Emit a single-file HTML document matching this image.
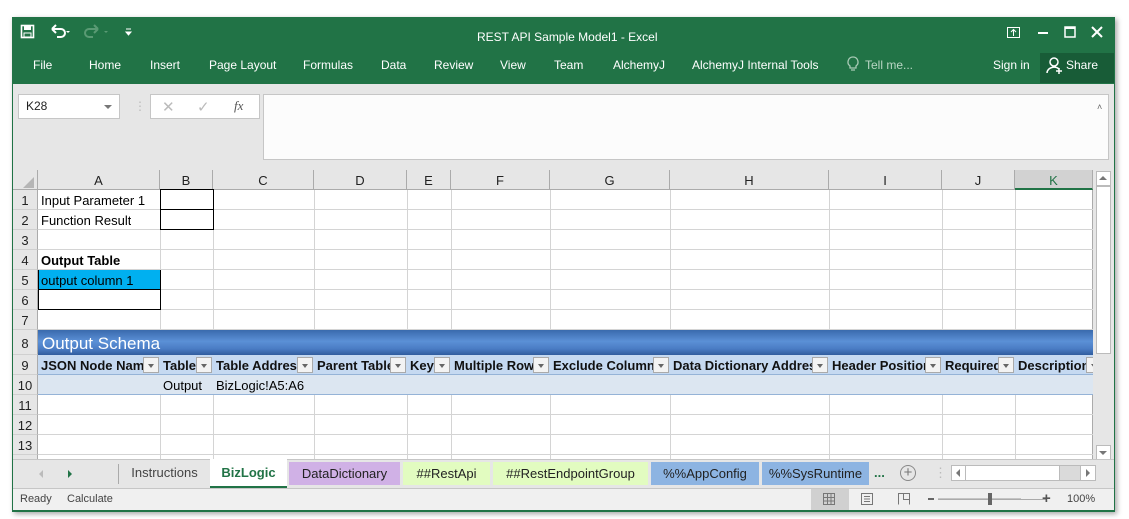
<!DOCTYPE html>
<html><head><meta charset="utf-8"><style>
*{margin:0;padding:0;box-sizing:border-box}
body{width:1129px;height:519px;background:#fff;position:relative;overflow:hidden;font-family:"Liberation Sans",sans-serif;}
.a{position:absolute}
.w{color:#fff;font-size:12px}
.vl{position:absolute;width:1px;background:#d4d4d4}
.hl{position:absolute;height:1px;background:#d4d4d4}
.ch{position:absolute;top:170px;height:20px;font-size:13px;color:#222;text-align:center;line-height:21px;border-right:1px solid #ababab;border-bottom:1px solid #ababab;background:#e6e6e6}
.rh{position:absolute;left:13px;width:25px;font-size:13px;color:#222;text-align:center;background:#e6e6e6;border-right:1px solid #ababab;border-bottom:1px solid #d0d0d0}
.c{position:absolute;font-size:13px;color:#000;line-height:21px;white-space:nowrap;overflow:hidden}
.fb{position:absolute;top:357px;width:16px;height:16px;background:#f3f3f3;border:1px solid #aaa}
.fb:after{content:"";position:absolute;left:4px;top:6px;border-left:3px solid transparent;border-right:3px solid transparent;border-top:4px solid #666}
.hd{position:absolute;top:355px;height:20px;line-height:21px;font-size:13px;font-weight:bold;color:#111;white-space:nowrap;overflow:hidden}
.tab{position:absolute;top:460px;height:27px;line-height:26px;font-size:13px;color:#222;text-align:center}
</style></head><body>
<div class="a" style="left:12px;top:17px;width:1103px;height:495px;box-shadow:2px 2px 5px rgba(0,0,0,.35);background:#e6e6e6;border:1px solid #217346"></div>
<div class="a" style="left:12px;top:17px;width:1103px;height:67px;background:#217346"></div>
<svg class="a" style="left:20px;top:23px" width="120" height="18">
<rect x="1.5" y="2.5" width="12" height="12" fill="none" stroke="#fff" stroke-width="1.6"/><rect x="4" y="3" width="7" height="4" fill="#fff"/><rect x="4" y="10" width="7" height="4" fill="none" stroke="#fff"/>
<path d="M32 6 L36 2 M32 6 L36 10 M32 6 H41 a4 4 0 0 1 0 8 H37" fill="none" stroke="#fff" stroke-width="2"/>
<path d="M46 8 l2 2 l2-2z" fill="#fff"/>
<path d="M78 6 L74 2 M78 6 L74 10 M78 6 H69 a4 4 0 0 0 0 8 H73" fill="none" stroke="#5a9a74" stroke-width="2"/>
<path d="M84 8 l2 2 l2-2z" fill="#5a9a74"/>
<path d="M106 6 h5 M106 9 l2.5 3 l2.5-3z" stroke="#fff" fill="#fff"/>
</svg>
<div class="a w" style="left:477px;top:30px">REST API Sample Model1 - Excel</div>
<svg class="a" style="left:1000px;top:24px" width="112" height="16">
<rect x="7.5" y="3.5" width="12" height="10" fill="none" stroke="#fff"/><path d="M13.5 12 V6 M11 8 l2.5-2.5 l2.5 2.5" stroke="#fff" fill="none"/>
<rect x="38" y="8" width="10" height="2" fill="#fff"/>
<rect x="65" y="3" width="10" height="10" fill="none" stroke="#fff" stroke-width="1.5"/><rect x="65" y="3" width="10" height="2" fill="#fff"/>
<path d="M92 3 L102 13 M102 3 L92 13" stroke="#fff" stroke-width="2"/>
</svg>
<div class="a w" style="left:33px;top:58px">File</div>
<div class="a w" style="left:89px;top:58px">Home</div>
<div class="a w" style="left:150px;top:58px">Insert</div>
<div class="a w" style="left:209px;top:58px">Page Layout</div>
<div class="a w" style="left:303px;top:58px">Formulas</div>
<div class="a w" style="left:381px;top:58px">Data</div>
<div class="a w" style="left:434px;top:58px">Review</div>
<div class="a w" style="left:500px;top:58px">View</div>
<div class="a w" style="left:554px;top:58px">Team</div>
<div class="a w" style="left:613px;top:58px">AlchemyJ</div>
<div class="a w" style="left:692px;top:58px">AlchemyJ Internal Tools</div>
<svg class="a" style="left:846px;top:56px" width="14" height="16"><path d="M7 1 a5 5 0 0 0-3 9 v2 h6 v-2 a5 5 0 0 0-3-9z M5 14 h4" fill="none" stroke="#a9cbb6" stroke-width="1.3"/></svg>
<div class="a w" style="left:865px;top:58px;color:#b9d6c4">Tell me...</div>
<div class="a w" style="left:993px;top:58px">Sign in</div>
<div class="a" style="left:1040px;top:53px;width:74px;height:30px;background:#185c37"></div>
<svg class="a" style="left:1045px;top:56px" width="20" height="20"><circle cx="9" cy="6" r="4" fill="none" stroke="#fff" stroke-width="1.5"/><path d="M2 17 a7 6 0 0 1 12-4 M14 12 v6 M11 15 h6" fill="none" stroke="#fff" stroke-width="1.5"/></svg>
<div class="a w" style="left:1066px;top:58px">Share</div>
<div class="a" style="left:13px;top:84px;width:1101px;height:86px;background:#e6e6e6"></div>
<div class="a" style="left:18px;top:94px;width:102px;height:25px;background:#fff;border:1px solid #c6c6c6;font-size:12px;line-height:23px;padding-left:7px;color:#222">K28</div>
<div class="a" style="left:104px;top:105px;border-left:4px solid transparent;border-right:4px solid transparent;border-top:4px solid #777"></div>
<div class="a" style="left:134px;top:99px;color:#bbb;font-size:12px">⋮</div>
<div class="a" style="left:150px;top:94px;width:110px;height:25px;background:#fff;border:1px solid #c6c6c6"></div>
<div class="a" style="left:162px;top:98px;color:#bbb;font-size:15px">✕</div>
<div class="a" style="left:197px;top:98px;color:#bbb;font-size:15px">✓</div>
<div class="a" style="left:234px;top:98px;color:#555;font-size:13px;font-style:italic;font-family:'Liberation Serif',serif">fx</div>
<div class="a" style="left:263px;top:94px;width:846px;height:66px;background:#fcfcfc;border:1px solid #c6c6c6"></div>
<div class="a" style="left:1097px;top:102px;color:#666;font-size:9px">&#x2C4;</div>
<div class="a" style="left:13px;top:170px;width:1080px;height:290px;background:#fff"></div>
<div class="a" style="left:13px;top:170px;width:25px;height:20px;background:#e6e6e6;border-right:1px solid #ababab;border-bottom:1px solid #ababab"></div>
<div class="a" style="left:23px;top:177px;border-left:11px solid transparent;border-bottom:11px solid #b5b5b5"></div>
<div class="ch" style="left:38px;width:122px">A</div>
<div class="ch" style="left:160px;width:53px">B</div>
<div class="ch" style="left:213px;width:101px">C</div>
<div class="ch" style="left:314px;width:93px">D</div>
<div class="ch" style="left:407px;width:44px">E</div>
<div class="ch" style="left:451px;width:99px">F</div>
<div class="ch" style="left:550px;width:120px">G</div>
<div class="ch" style="left:670px;width:159px">H</div>
<div class="ch" style="left:829px;width:113px">I</div>
<div class="ch" style="left:942px;width:73px">J</div>
<div class="ch" style="left:1015px;width:78px;background:#d2d2d2;color:#217346;border-bottom:2px solid #217346">K</div>
<div class="vl" style="left:160px;top:190px;height:270px"></div>
<div class="vl" style="left:213px;top:190px;height:270px"></div>
<div class="vl" style="left:314px;top:190px;height:270px"></div>
<div class="vl" style="left:407px;top:190px;height:270px"></div>
<div class="vl" style="left:451px;top:190px;height:270px"></div>
<div class="vl" style="left:550px;top:190px;height:270px"></div>
<div class="vl" style="left:670px;top:190px;height:270px"></div>
<div class="vl" style="left:829px;top:190px;height:270px"></div>
<div class="vl" style="left:942px;top:190px;height:270px"></div>
<div class="vl" style="left:1015px;top:190px;height:270px"></div>
<div class="vl" style="left:1092px;top:190px;height:270px;background:#ababab"></div>
<div class="hl" style="left:38px;top:209px;width:1055px"></div>
<div class="hl" style="left:38px;top:229px;width:1055px"></div>
<div class="hl" style="left:38px;top:249px;width:1055px"></div>
<div class="hl" style="left:38px;top:269px;width:1055px"></div>
<div class="hl" style="left:38px;top:289px;width:1055px"></div>
<div class="hl" style="left:38px;top:309px;width:1055px"></div>
<div class="hl" style="left:38px;top:329px;width:1055px"></div>
<div class="hl" style="left:38px;top:414px;width:1055px"></div>
<div class="hl" style="left:38px;top:434px;width:1055px"></div>
<div class="hl" style="left:38px;top:454px;width:1055px"></div>
<div class="rh" style="top:190px;height:20px;line-height:21px">1</div>
<div class="rh" style="top:210px;height:20px;line-height:21px">2</div>
<div class="rh" style="top:230px;height:20px;line-height:21px">3</div>
<div class="rh" style="top:250px;height:20px;line-height:21px">4</div>
<div class="rh" style="top:270px;height:20px;line-height:21px">5</div>
<div class="rh" style="top:290px;height:20px;line-height:21px">6</div>
<div class="rh" style="top:310px;height:20px;line-height:21px">7</div>
<div class="rh" style="top:330px;height:25px;line-height:28px">8</div>
<div class="rh" style="top:355px;height:20px;line-height:21px">9</div>
<div class="rh" style="top:375px;height:20px;line-height:21px">10</div>
<div class="rh" style="top:395px;height:20px;line-height:21px">11</div>
<div class="rh" style="top:415px;height:20px;line-height:21px">12</div>
<div class="rh" style="top:435px;height:20px;line-height:21px">13</div>
<div class="rh" style="top:455px;height:5px;border-bottom:none"></div>
<div class="c" style="left:41px;top:190px">Input Parameter 1</div>
<div class="c" style="left:41px;top:210px">Function Result</div>
<div class="a" style="left:160px;top:189px;width:54px;height:41px;border:1px solid #000"></div>
<div class="a" style="left:160px;top:209px;width:54px;height:1px;background:#000"></div>
<div class="c" style="left:41px;top:250px;font-weight:bold">Output Table</div>
<div class="a" style="left:38px;top:270px;width:123px;height:40px;border:1px solid #000"></div>
<div class="a" style="left:39px;top:270px;width:121px;height:20px;background:#00b0f0;border-bottom:1px solid #000"></div>
<div class="c" style="left:41px;top:270px">output column 1</div>
<div class="a" style="left:38px;top:330px;width:1055px;height:25px;background:linear-gradient(#3a6aad,#5b90d6 45%,#4a7cc4 75%,#2f5c9e)"></div>
<div class="a" style="left:42px;top:331px;font-size:17px;color:#fff;line-height:25px">Output Schema</div>
<div class="a" style="left:38px;top:355px;width:1055px;height:20px;background:#c5d9f1;border-bottom:1px solid #95b3d7"></div>
<div class="hd" style="left:41px;width:102px">JSON Node Name</div><div class="fb" style="left:143px"></div>
<div class="hd" style="left:163px;width:33px">Table</div><div class="fb" style="left:196px"></div>
<div class="hd" style="left:216px;width:81px">Table Address</div><div class="fb" style="left:297px"></div>
<div class="hd" style="left:317px;width:73px">Parent Table</div><div class="fb" style="left:390px"></div>
<div class="hd" style="left:410px;width:24px">Key</div><div class="fb" style="left:434px"></div>
<div class="hd" style="left:454px;width:79px">Multiple Rows</div><div class="fb" style="left:533px"></div>
<div class="hd" style="left:553px;width:100px">Exclude Column</div><div class="fb" style="left:653px"></div>
<div class="hd" style="left:673px;width:139px">Data Dictionary Address</div><div class="fb" style="left:812px"></div>
<div class="hd" style="left:832px;width:93px">Header Position</div><div class="fb" style="left:925px"></div>
<div class="hd" style="left:945px;width:53px">Required</div><div class="fb" style="left:998px"></div>
<div class="hd" style="left:1018px;width:68px">Description</div><div class="fb" style="left:1086px;width:7px;border-right:none"></div>
<div class="a" style="left:38px;top:375px;width:1055px;height:20px;background:#dce6f1;border-bottom:1px solid #95b3d7"></div>
<div class="c" style="left:163px;top:375px">Output</div>
<div class="c" style="left:216px;top:375px">BizLogic!A5:A6</div>
<div class="a" style="left:1093px;top:170px;width:20px;height:290px;background:#e6e6e6"></div>
<div class="a" style="left:1096px;top:171px;width:15px;height:15px;background:#fff;border:1px solid #bbb"></div>
<div class="a" style="left:1099px;top:176px;border-left:4px solid transparent;border-right:4px solid transparent;border-bottom:4px solid #777"></div>
<div class="a" style="left:1096px;top:186px;width:15px;height:168px;background:#fff;border:1px solid #bbb"></div>
<div class="a" style="left:1096px;top:445px;width:15px;height:15px;background:#fff;border:1px solid #bbb"></div>
<div class="a" style="left:1099px;top:451px;border-left:4px solid transparent;border-right:4px solid transparent;border-top:4px solid #777"></div>
<div class="a" style="left:13px;top:459px;width:1101px;height:30px;background:#e6e6e6;border-top:1px solid #c6c6c6;border-bottom:1px solid #c6c6c6"></div>
<div class="a" style="left:39px;top:470px;border-top:4px solid transparent;border-bottom:4px solid transparent;border-right:4px solid #bbb"></div>
<div class="a" style="left:68px;top:470px;border-top:4px solid transparent;border-bottom:4px solid transparent;border-left:4px solid #217346"></div>
<div class="a" style="left:118px;top:464px;width:1px;height:20px;background:#aaa"></div>
<div class="tab" style="left:119px;width:91px;color:#444">Instructions</div>
<div class="tab" style="left:210px;width:77px;background:#fff;color:#217346;font-weight:bold;border-bottom:2px solid #217346;top:459px;height:29px;line-height:28px">BizLogic</div>
<div class="tab" style="left:289px;width:111px;background:#d0b1e6;top:462px;height:23px;line-height:23px">DataDictionary</div>
<div class="tab" style="left:403px;width:87px;background:#e2fcc0;top:462px;height:23px;line-height:23px">##RestApi</div>
<div class="tab" style="left:493px;width:155px;background:#e2fcc0;top:462px;height:23px;line-height:23px">##RestEndpointGroup</div>
<div class="tab" style="left:651px;width:108px;background:#8db4e2;top:462px;height:23px;line-height:23px">%%AppConfig</div>
<div class="tab" style="left:762px;width:107px;background:#8db4e2;top:462px;height:23px;line-height:23px">%%SysRuntime</div>
<div class="a" style="left:874px;top:465px;font-size:13px;font-weight:bold;color:#217346">...</div>
<div class="a" style="left:900px;top:465px;width:16px;height:16px;border:1.5px solid #888;border-radius:50%;text-align:center;line-height:13px;font-size:15px;color:#777">+</div>
<div class="a" style="left:934px;top:465px;color:#bbb;font-size:13px">⋮</div>
<div class="a" style="left:951px;top:465px;width:145px;height:16px;background:#dadada;border:1px solid #bbb"></div>
<div class="a" style="left:952px;top:466px;width:14px;height:14px;background:#fff;border-right:1px solid #bbb"></div>
<div class="a" style="left:956px;top:469px;border-top:4px solid transparent;border-bottom:4px solid transparent;border-right:4px solid #777"></div>
<div class="a" style="left:966px;top:466px;width:94px;height:14px;background:#fff;border-right:1px solid #bbb"></div>
<div class="a" style="left:1080px;top:466px;width:15px;height:14px;background:#fff;border-left:1px solid #bbb"></div>
<div class="a" style="left:1086px;top:469px;border-top:4px solid transparent;border-bottom:4px solid transparent;border-left:4px solid #777"></div>
<div class="a" style="left:13px;top:489px;width:1101px;height:22px;background:#f0f0f0;border-bottom:1px solid #217346"></div>
<div class="a" style="left:20px;top:493px;font-size:11px;color:#444">Ready</div>
<div class="a" style="left:67px;top:493px;font-size:11px;color:#444">Calculate</div>
<div class="a" style="left:811px;top:489px;width:38px;height:21px;background:#d0d0d0"></div>
<svg class="a" style="left:821px;top:491px" width="200" height="16">
<rect x="2.5" y="2.5" width="11" height="11" fill="none" stroke="#777"/><path d="M6.5 2.5v11M10 2.5v11M2.5 6.5h11M2.5 10h11" stroke="#777"/>
<rect x="40.5" y="2.5" width="11" height="11" fill="none" stroke="#777"/><path d="M43 5.5h6M43 8h6M43 10.5h6" stroke="#777"/>
<path d="M77.5 13.5v-11h11v11M82.5 2.5v6h6" fill="none" stroke="#777"/>
<path d="M107 8h6" stroke="#666" stroke-width="2"/>
<path d="M117 8h101" stroke="#999"/>
</svg>
<div class="a" style="left:938px;top:499px;width:109px;height:1px;background:#aaa"></div>
<div class="a" style="left:988px;top:493px;width:4px;height:12px;background:#666"></div>
<div class="a" style="left:1042px;top:490px;font-size:15px;color:#555;font-weight:bold">+</div>
<div class="a" style="left:1067px;top:493px;font-size:11px;color:#444">100%</div>
</body></html>
